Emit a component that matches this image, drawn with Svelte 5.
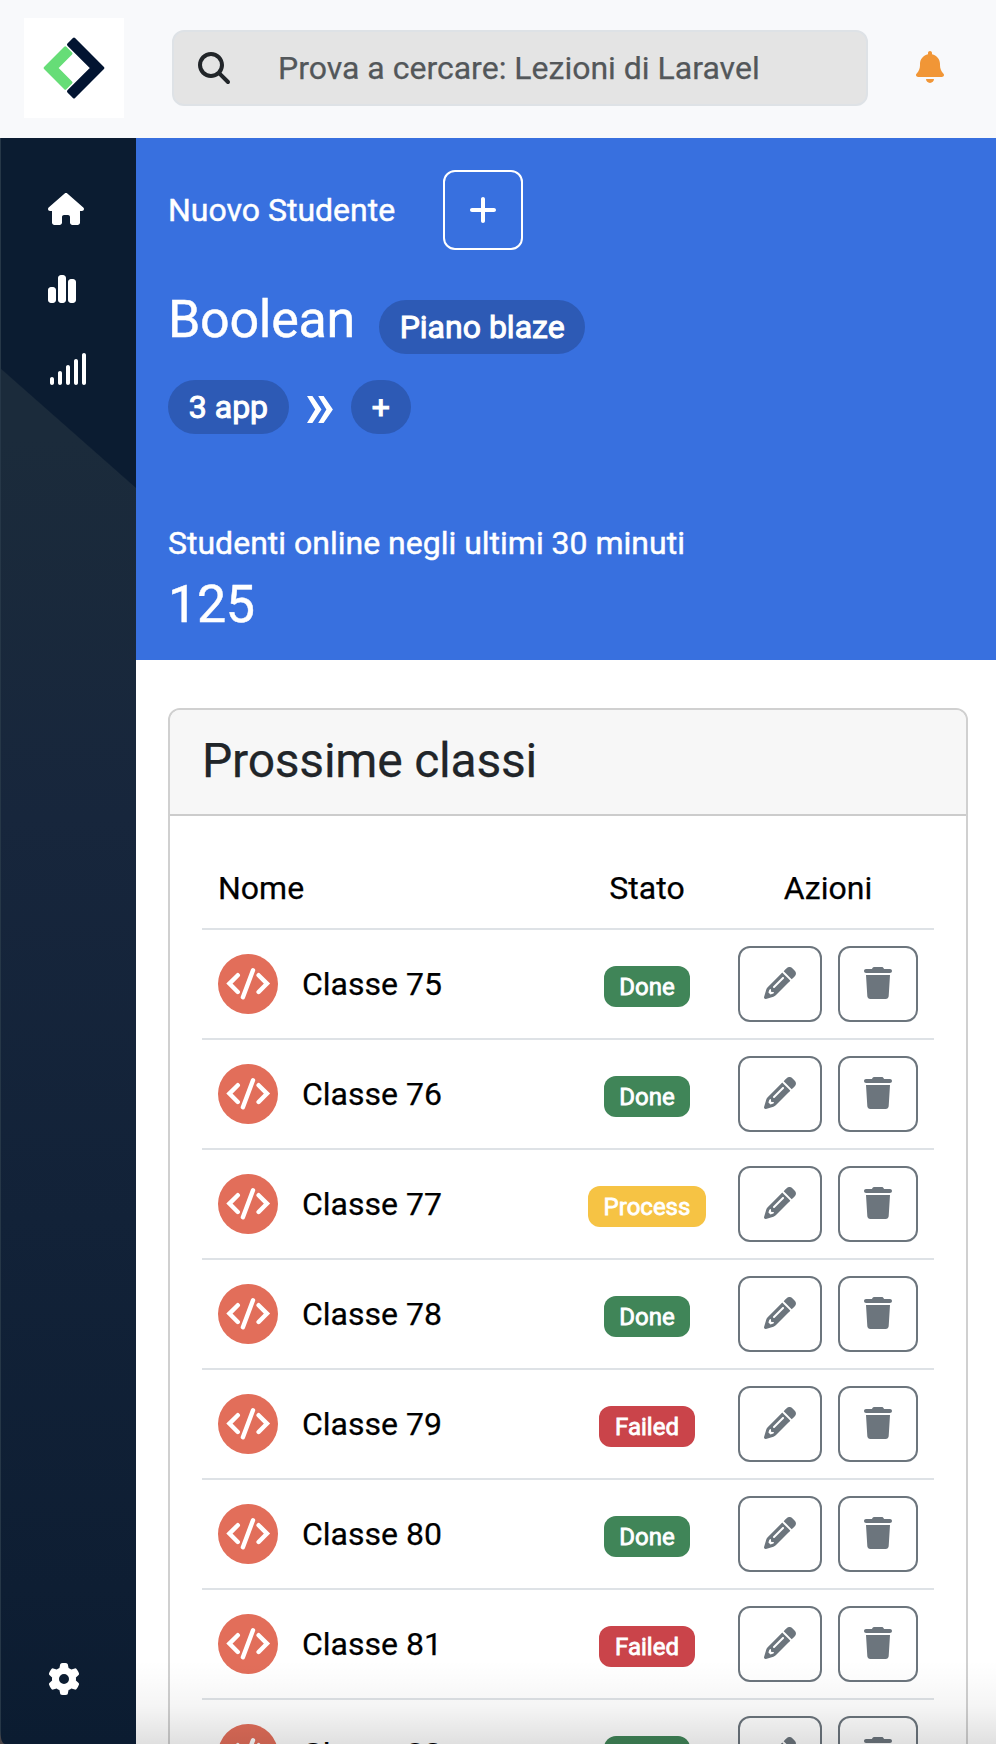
<script>
  const icons = {
    search: { w: 512, d: 'M416 208c0 45.9-14.9 88.3-40 122.7L502.6 457.4c12.5 12.5 12.5 32.8 0 45.3s-32.8 12.5-45.3 0L330.7 376c-34.4 25.2-76.8 40-122.7 40C93.1 416 0 322.9 0 208S93.1 0 208 0S416 93.1 416 208zM208 352a144 144 0 1 0 0-288 144 144 0 1 0 0 288z' },
    bell: { w: 448, d: 'M224 0c-17.7 0-32 14.3-32 32V51.2C119 66 64 130.6 64 208v18.8c0 47-17.3 92.4-48.5 127.6l-7.4 8.3c-8.4 9.4-10.4 22.9-5.3 34.4S19.4 416 32 416H416c12.6 0 24-7.4 29.2-18.9s3.1-25-5.3-34.4l-7.4-8.3C401.3 319.2 384 273.9 384 226.8V208c0-77.4-55-142-128-156.8V32c0-17.7-14.3-32-32-32zm45.3 493.3c12-12 18.7-28.3 18.7-45.3H224 160c0 17 6.7 33.3 18.7 45.3s28.3 18.7 45.3 18.7s33.3-6.7 45.3-18.7z' },
    house: { w: 576, d: 'M575.8 255.5c0 18-15 32.1-32 32.1h-32l.7 160.2c0 2.7-.2 5.4-.5 8.1V472c0 22.1-17.9 40-40 40H456c-1.1 0-2.2 0-3.3-.1c-1.4 .1-2.8 .1-4.2 .1H416 392c-22.1 0-40-17.9-40-40V448 384c0-17.7-14.3-32-32-32H256c-17.7 0-32 14.3-32 32v64 24c0 22.1-17.9 40-40 40H160 128.1c-1.5 0-3-.1-4.5-.2c-1.2 .1-2.4 .2-3.6 .2H104c-22.1 0-40-17.9-40-40V360c0-.9 0-1.9 .1-2.8V287.6H32c-18 0-32-14-32-32.1c0-9 3-17 10-24L266.4 8c7-7 15-8 22-8s15 2 21 7L564.8 231.5c8 7 12 15 11 24z' },
    chart: { w: 448, d: 'M160 80c0-26.5 21.5-48 48-48h32c26.5 0 48 21.5 48 48V432c0 26.5-21.5 48-48 48H208c-26.5 0-48-21.5-48-48V80zM0 272c0-26.5 21.5-48 48-48H80c26.5 0 48 21.5 48 48V432c0 26.5-21.5 48-48 48H48c-26.5 0-48-21.5-48-48V272zM368 96h32c26.5 0 48 21.5 48 48V432c0 26.5-21.5 48-48 48H368c-26.5 0-48-21.5-48-48V144c0-26.5 21.5-48 48-48z' },
    signal: { w: 640, d: 'M576 0c17.7 0 32 14.3 32 32V480c0 17.7-14.3 32-32 32s-32-14.3-32-32V32c0-17.7 14.3-32 32-32zM448 96c17.7 0 32 14.3 32 32V480c0 17.7-14.3 32-32 32s-32-14.3-32-32V128c0-17.7 14.3-32 32-32zM352 224V480c0 17.7-14.3 32-32 32s-32-14.3-32-32V224c0-17.7 14.3-32 32-32s32 14.3 32 32zM192 288c17.7 0 32 14.3 32 32V480c0 17.7-14.3 32-32 32s-32-14.3-32-32V320c0-17.7 14.3-32 32-32zM96 416v64c0 17.7-14.3 32-32 32s-32-14.3-32-32V416c0-17.7 14.3-32 32-32s32 14.3 32 32z' },
    gear: { w: 512, d: 'M495.9 166.6c3.2 8.7 .5 18.4-6.4 24.6l-43.3 39.4c1.1 8.3 1.7 16.8 1.7 25.4s-.6 17.1-1.7 25.4l43.3 39.4c6.9 6.2 9.6 15.9 6.4 24.6c-4.4 11.9-9.7 23.3-15.8 34.3l-4.7 8.1c-6.6 11-14 21.4-22.1 31.2c-5.9 7.2-15.7 9.6-24.5 6.8l-55.7-17.7c-13.4 10.3-28.2 18.9-44 25.4l-12.5 57.1c-2 9.1-9 16.3-18.2 17.8c-13.8 2.3-28 3.5-42.5 3.5s-28.7-1.2-42.5-3.5c-9.2-1.5-16.2-8.7-18.2-17.8l-12.5-57.1c-15.8-6.5-30.6-15.1-44-25.4L83.1 425.9c-8.8 2.8-18.6 .3-24.5-6.8c-8.1-9.8-15.5-20.2-22.1-31.2l-4.7-8.1c-6.1-11-11.4-22.4-15.8-34.3c-3.2-8.7-.5-18.4 6.4-24.6l43.3-39.4C64.6 273.1 64 264.6 64 256s.6-17.1 1.7-25.4L22.4 191.2c-6.9-6.2-9.6-15.9-6.4-24.6c4.4-11.9 9.7-23.3 15.8-34.3l4.7-8.1c6.6-11 14-21.4 22.1-31.2c5.9-7.2 15.7-9.6 24.5-6.8l55.7 17.7c13.4-10.3 28.2-18.9 44-25.4l12.5-57.1c2-9.1 9-16.3 18.2-17.8C227.3 1.2 241.5 0 256 0s28.7 1.2 42.5 3.5c9.2 1.5 16.2 8.7 18.2 17.8l12.5 57.1c15.8 6.5 30.6 15.1 44 25.4l55.7-17.7c8.8-2.8 18.6-.3 24.5 6.8c8.1 9.8 15.5 20.2 22.1 31.2l4.7 8.1c6.1 11 11.4 22.4 15.8 34.3zM256 336a80 80 0 1 0 0-160 80 80 0 1 0 0 160z' },
    plus: { w: 448, d: 'M256 80c0-17.7-14.3-32-32-32s-32 14.3-32 32V224H48c-17.7 0-32 14.3-32 32s14.3 32 32 32H192V432c0 17.7 14.3 32 32 32s32-14.3 32-32V288H400c17.7 0 32-14.3 32-32s-14.3-32-32-32H256V80z' },
    pencil: { w: 512, d: 'M410.3 231l11.3-11.3-33.9-33.9-62.1-62.1L291.7 89.8l-11.3 11.3-22.6 22.6L58.6 322.9c-10.4 10.4-18 23.3-22.2 37.4L1 480.7c-2.5 8.4-.2 17.5 6.1 23.7s15.3 8.5 23.7 6.1l120.3-35.4c14.1-4.2 27-11.8 37.4-22.2L387.7 253.7 410.3 231zM160 399.4l-9.1 22.7c-4 3.1-8.5 5.4-13.3 6.9L104 439 71 407l11.4-33.1c1.4-4.9 3.8-9.4 6.9-13.3l22.7-9.1v32c0 8.8 7.2 16 16 16h32zM362.7 18.7L348.3 33.2 325.7 55.8 314.3 67.1l33.9 33.9 62.1 62.1 33.9 33.9 11.3-11.3 22.6-22.6 14.5-14.5c25-25 25-65.5 0-90.5L453.3 18.7c-25-25-65.5-25-90.5 0zm-47.4 168l-144 144c-6.2 6.2-16.4 6.2-22.6 0s-6.2-16.4 0-22.6l144-144c6.2-6.2 16.4-6.2 22.6 0s6.2 16.4 0 22.6z' },
    trash: { w: 448, d: 'M135.2 17.7C140.6 6.8 151.7 0 163.8 0H284.2c12.1 0 23.2 6.8 28.6 17.7L320 32h96c17.7 0 32 14.3 32 32s-14.3 32-32 32H32C14.3 96 0 81.7 0 64S14.3 32 32 32h96l7.2-14.3zM32 128H416L394.8 467c-1.6 25.3-22.6 45-47.9 45H101.1c-25.3 0-46.3-19.7-47.9-45L32 128z' }
  };

  const rows = [
    { name: 'Classe 75', status: 'Done' },
    { name: 'Classe 76', status: 'Done' },
    { name: 'Classe 77', status: 'Process' },
    { name: 'Classe 78', status: 'Done' },
    { name: 'Classe 79', status: 'Failed' },
    { name: 'Classe 80', status: 'Done' },
    { name: 'Classe 81', status: 'Failed' },
    { name: 'Classe 82', status: 'Done' }
  ];
</script>

{#snippet icon(name)}
  <svg class="icon" viewBox="0 0 {icons[name].w} 512" width={icons[name].w / 16} height="32" fill="currentColor" aria-hidden="true">
    <path d={icons[name].d} />
  </svg>
{/snippet}

<div class="page">
  <header>
    <div class="logo">
      <svg viewBox="0 0 100 100" width="100" height="100" stroke-width="3" stroke-linejoin="round" aria-hidden="true">
        <path d="M50 21.1 78.9 50 50 78.9 44.5 73.4 67.8 50 44.5 26.6Z" fill="#021431" stroke="#021431" />
        <path d="M41.3 29.8 47 35.5 32.6 50 47 64.5 41.3 70.2 21.1 50Z" fill="#66dd77" stroke="#66dd77" />
      </svg>
    </div>
    <div class="search">
      {@render icon('search')}
      <span>Prova a cercare: Lezioni di Laravel</span>
    </div>
    <div class="bell">{@render icon('bell')}</div>
  </header>

  <div class="body">
    <nav>
      <div class="links">
        {@render icon('house')}
        {@render icon('chart')}
        {@render icon('signal')}
      </div>
      {@render icon('gear')}
    </nav>

    <main>
      <section class="hero">
        <div class="new">
          <span>Nuovo Studente</span>
          <button class="add" aria-label="Nuovo Studente">{@render icon('plus')}</button>
        </div>
        <div class="plan">
          <h2>Boolean</h2>
          <span class="pill">Piano blaze</span>
        </div>
        <div class="apps">
          <span class="pill">3 app</span>
          <svg class="angles" viewBox="0 0 26 27" width="26" height="27" fill="#fff" aria-hidden="true">
            <path d="M0 0H5.4L14.5 13.5 5.4 27H0L8.2 13.5ZM11.2 0H16.6L25.9 13.5 16.6 27H11.2L19.4 13.5Z" />
          </svg>
          <span class="pill">+</span>
        </div>
        <p>Studenti online negli ultimi 30 minuti</p>
        <strong>125</strong>
      </section>

      <section class="card">
        <h3>Prossime classi</h3>
        <div class="table">
          <div class="row head">
            <span>Nome</span><span class="mid">Stato</span><span class="mid">Azioni</span>
          </div>
          {#each rows as row}
            <div class="row">
              <div class="name">
                <svg viewBox="0 0 60 60" width="60" height="60" aria-hidden="true">
                  <circle cx="30" cy="30" r="30" fill="#e26e5a" />
                  <path d="M19.8 21.2 11.4 29.6 19.8 38M40.6 21.2 49 29.6 40.6 38M35 16.2 24.9 43.2" fill="none" stroke="#fff" stroke-width="4.4" stroke-linecap="round" stroke-linejoin="miter" />
                </svg>
                <span>{row.name}</span>
              </div>
              <div class="mid"><span class="badge {row.status.toLowerCase()}">{row.status}</span></div>
              <div class="actions">
                <button aria-label="Modifica">{@render icon('pencil')}</button>
                <button aria-label="Elimina">{@render icon('trash')}</button>
              </div>
            </div>
          {/each}
        </div>
      </section>
      <div class="shade"></div>
    </main>
  </div>
</div>

<style>
  :global(body) { margin: 0; background: #fff; }
  .page, .page * { box-sizing: border-box; }
  .page {
    width: 996px;
    height: 1744px;
    overflow: hidden;
    display: flex;
    flex-direction: column;
    font: 400 32px/48px Roboto, sans-serif;
    color: #000;
    -webkit-text-stroke: 0.25px currentColor;
  }
  svg { display: block; flex: none; }
  h2, h3, p { margin: 0; font-weight: 400; }

  header {
    flex: none;
    height: 138px;
    padding: 0 52px 2px 24px;
    background: #f8f9fb;
    display: flex;
    align-items: center;
  }
  .logo { width: 100px; height: 100px; background: #fff; }
  .search {
    width: 696px;
    height: 76px;
    margin-left: 48px;
    padding-left: 24px;
    display: flex;
    align-items: center;
    gap: 48px;
    background: #e4e4e4;
    border: 2px solid #dee2e6;
    border-radius: 12px;
    color: #212529;
  }
  .search span { color: #53575a; }
  .bell { margin: -2px 0 0 auto; color: #f19636; }

  .body { flex: 1; min-height: 0; display: flex; background: linear-gradient(90deg, #4a4548 136px, #fff 136px); }
  nav {
    flex: none;
    width: 136px;
    padding: 55px 0 49px 48px;
    display: flex;
    flex-direction: column;
    justify-content: space-between;
    color: #fff;
    border-bottom-left-radius: 5px 14px;
    background:
      linear-gradient(90deg, #263747 1px, transparent 1px),
      linear-gradient(to top right, transparent 49.7%, #0b1c31 50.3%) 0 230px / 136px 120px no-repeat,
      linear-gradient(#0b1c31, #0b1c31) 0 0 / 136px 230px no-repeat,
      linear-gradient(#1b2b3b 300px, #17263c 680px, #122238 1080px, #0e1e33 1450px, #0b1c31 1606px);
  }
  .links { display: flex; flex-direction: column; gap: 48px; }

  main { position: relative; flex: 1; min-width: 0; overflow: hidden; }
  .hero {
    height: 522px;
    padding: 32px;
    color: #fff;
    background: #3870df;
    -webkit-text-stroke: 0.45px currentColor;
  }
  .new { display: flex; align-items: center; gap: 48px; height: 80px; }
  .add {
    width: 80px;
    height: 80px;
    border: 2px solid #fff;
    border-radius: 12px;
  }
  button {
    padding: 0;
    display: flex;
    align-items: center;
    justify-content: center;
    background: none;
    border: 2px solid #6c757d;
    border-radius: 12px;
    color: inherit;
  }
  .hero .add { border-color: #fff; }
  .plan { display: flex; margin-top: 40px; gap: 24px; }
  h2 { font-size: 52px; line-height: 60px; letter-spacing: -0.3px; }
  .pill {
    height: 54px;
    padding: 0 20.8px;
    border-radius: 27px;
    background: #2d5ab5;
    line-height: 54px;
    -webkit-text-stroke: 1px currentColor;
  }
  .plan .pill { margin-top: 10px; }
  .apps { display: flex; align-items: center; margin-top: 26px; }
  .angles { margin: 5px 18px 0; }
  .hero p { margin-top: 85px; }
  .hero strong { display: block; font-size: 52px; font-weight: 400; line-height: 62px; margin-top: 7px; letter-spacing: -0.3px; }

  .card {
    width: 800px;
    margin: 48px 0 0 32px;
    border: 2px solid #d0d0d0;
    border-radius: 12px;
    background: #fff;
    overflow: hidden;
  }
  h3 {
    height: 106px;
    padding: 22px 32px 0;
    font-size: 48px;
    line-height: 58px;
    letter-spacing: -0.22px;
    color: #212529;
    background: #f7f7f7;
    border-bottom: 2px solid #ccc;
  }
  .table { padding: 32px; }
  .row {
    display: grid;
    grid-template-columns: 370px 150px 212px;
    align-items: center;
    height: 110px;
    border-bottom: 2px solid #dee2e6;
  }
  .head { height: 82px; }
  .head span:first-child { padding-left: 16px; }
  .mid { text-align: center; display: flex; justify-content: center; }
  .name { display: flex; align-items: center; gap: 24px; padding-left: 16px; }
  .badge {
    height: 41px;
    margin-top: 5px;
    padding: 0 15.6px;
    border-radius: 12px;
    font-size: 24px;
    line-height: 42px;
    color: #fff;
    -webkit-text-stroke: 0.8px currentColor;
  }
  .done { background: #408558; }
  .process { background: #f6c344; }
  .failed { background: #ca444a; }
  .actions { display: flex; gap: 16px; padding-left: 16px; color: #6c757d; }
  .actions button { width: 84px; height: 76px; padding-bottom: 2px; }
  .actions button + button { width: 80px; }
  .shade {
    position: absolute;
    inset: auto 0 0 0;
    height: 84px;
    background: linear-gradient(transparent, rgba(0, 0, 0, 0.01) 20%, rgba(0, 0, 0, 0.04) 55%, rgba(0, 0, 0, 0.12));
    pointer-events: none;
  }
</style>
